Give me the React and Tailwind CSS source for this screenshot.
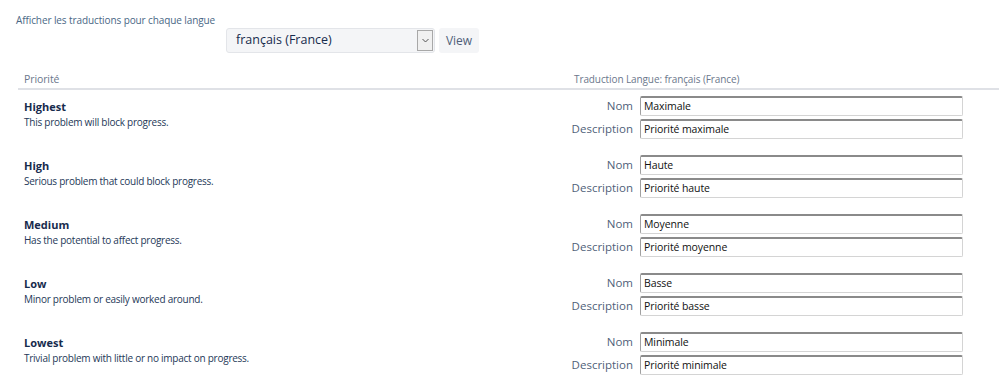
import React from "react";

const rows = [
  { name: "Highest", desc: "This problem will block progress.", nom: "Maximale", d: "Priorité maximale" },
  { name: "High", desc: "Serious problem that could block progress.", nom: "Haute", d: "Priorité haute" },
  { name: "Medium", desc: "Has the potential to affect progress.", nom: "Moyenne", d: "Priorité moyenne" },
  { name: "Low", desc: "Minor problem or easily worked around.", nom: "Basse", d: "Priorité basse" },
  { name: "Lowest", desc: "Trivial problem with little or no impact on progress.", nom: "Minimale", d: "Priorité minimale" },
];

function Field({ value }) {
  return (
    <div className="w-[323px] h-[20px] bg-white border border-[#d4d4d4] border-t-2 border-t-[#8a8a8a] border-l-[#a0a0a0] rounded-[2px] flex items-center pl-[3px] text-[10.5px] tracking-[-0.1px] text-[#111] leading-none">
      {value}
    </div>
  );
}

export default function App() {
  return (
    <div className="w-[999px] h-[385px] bg-white overflow-hidden" style={{ fontFamily: '"Open Sans", "Noto Sans", sans-serif' }}>
      <div className="pl-4 pt-[13px] text-[10px] tracking-[-0.1px] text-[#4a6785] leading-[14px]">Afficher les traductions pour chaque langue</div>
      <div className="flex items-center ml-[226px] mt-[1px] gap-[4px]">
        <div className="w-[209px] h-[25px] bg-[#f4f5f7] border border-[#e3e5e9] rounded-[3px] flex items-center justify-between pl-[9px] pr-[1px]">
          <span className="text-[12.5px] text-[#172b4d]">français (France)</span>
          <div className="w-[16px] h-[21px] border border-[#a8a8a8] bg-[#f0f0f0] flex items-center justify-center">
            <svg width="7" height="5" viewBox="0 0 7 5"><path d="M0.5 1 L3.5 4 L6.5 1" fill="none" stroke="#555" strokeWidth="1" /></svg>
          </div>
        </div>
        <div className="w-[40px] h-[25px] bg-[#f4f5f7] rounded-[3px] flex items-center justify-center text-[12px] text-[#505f79]">View</div>
      </div>
      <div className="ml-[18px] mt-[20px]">
        <div className="grid grid-cols-[548px_1fr] border-b-2 border-[#dfe1e6] h-[17px] text-[10px] tracking-[-0.1px] text-[#6b778c] leading-[12px]">
          <div className="pl-[6px] text-[10.5px]">Priorité</div>
          <div className="pl-[8px]">Traduction Langue: français (France)</div>
        </div>
        {rows.map((r) => (
          <div key={r.name} className="grid grid-cols-[548px_1fr] h-[59px]">
            <div className="pl-[6px] pt-[9px]">
              <div className="text-[11px] font-bold text-[#172b4d] leading-[16px]">{r.name}</div>
              <div className="text-[10px] tracking-[-0.25px] text-[#253858] leading-[14px]">{r.desc}</div>
            </div>
            <div className="pt-[6px] flex flex-col gap-[3px]">
              <div className="flex items-center">
                <div className="w-[74px] text-right pr-[7px] text-[11.5px] text-[#505f79]">Nom</div>
                <Field value={r.nom} />
              </div>
              <div className="flex items-center">
                <div className="w-[74px] text-right pr-[7px] text-[11.5px] text-[#505f79]">Description</div>
                <Field value={r.d} />
              </div>
            </div>
          </div>
        ))}
      </div>
    </div>
  );
}
